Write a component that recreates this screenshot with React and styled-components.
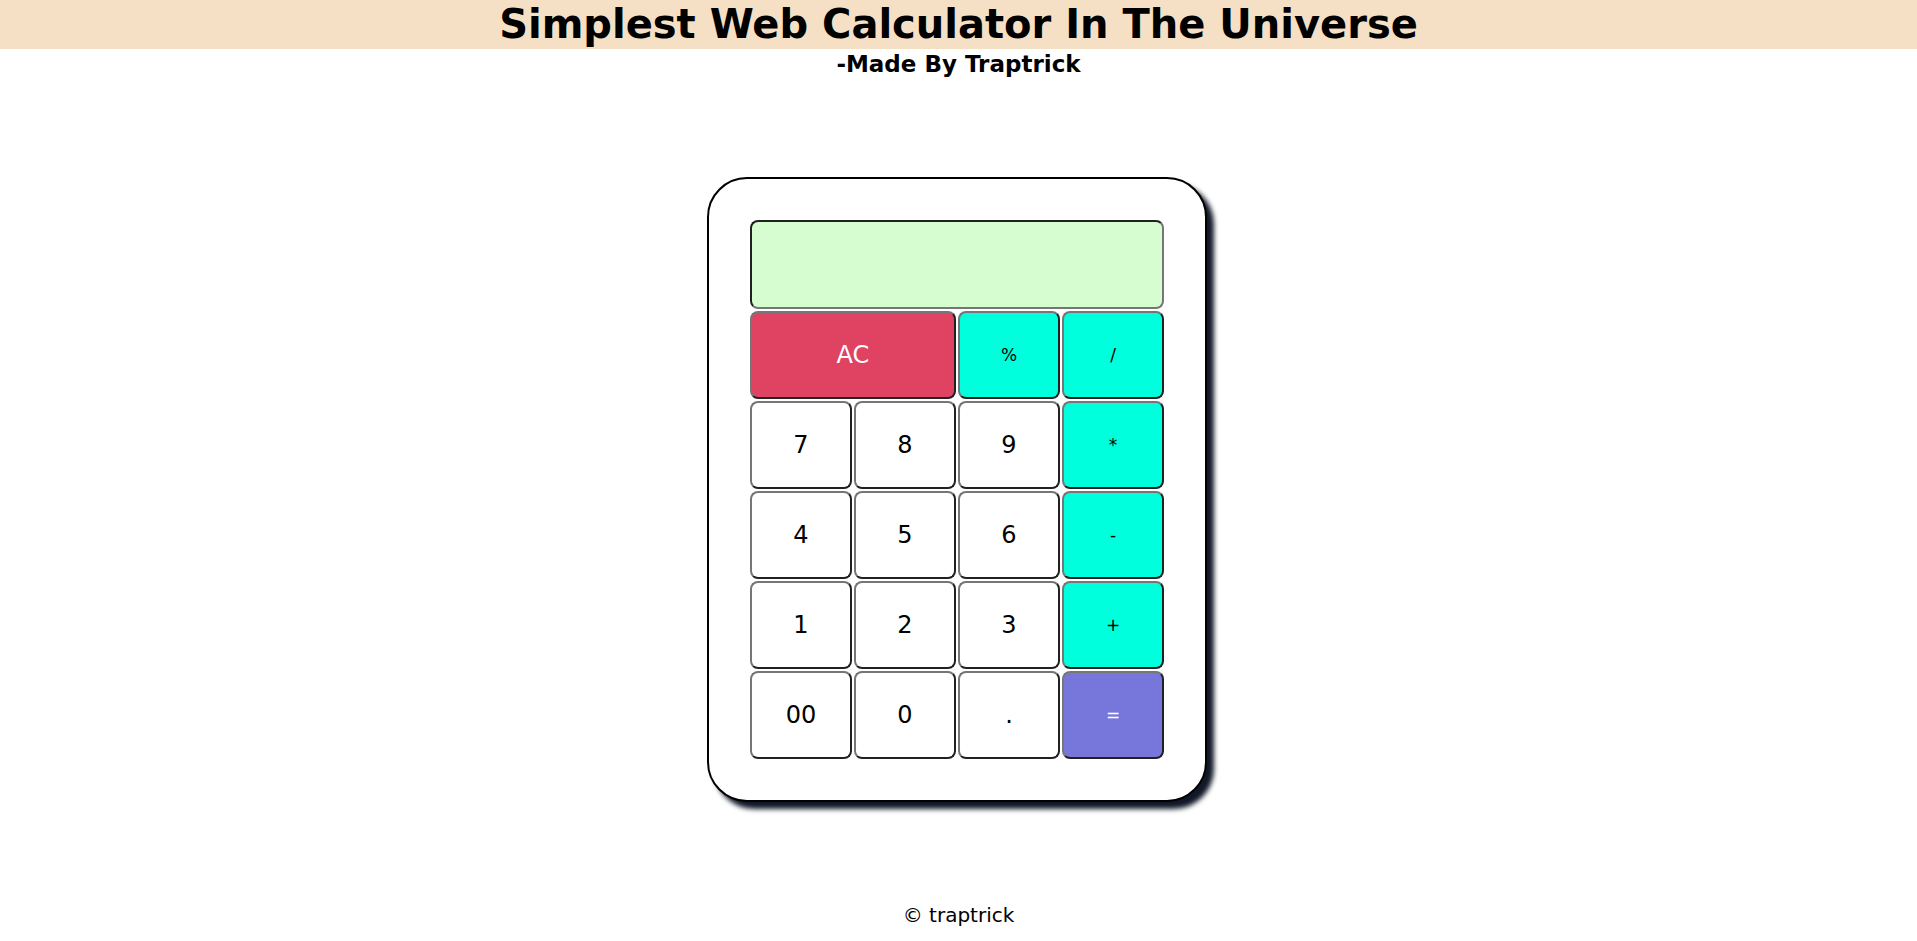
import React, {useState} from 'react'
import styled, {createGlobalStyle} from 'styled-components';

const GlobalStyle = createGlobalStyle`
  * { box-sizing: border-box; }
  body {
    margin: 0;
    font-family: Verdana, "DejaVu Sans", sans-serif;
    background: #fff;
  }
`
const Page = styled.div`
  width: 100%;
  min-height: 941px;
  display: flex;
  flex-direction: column;
  align-items: center;
`
const Title = styled.h1`
  width: 100%;
  margin: 0;
  background: #f5dfc5;
  text-align: center;
  font-size: 40px;
  line-height: 49px;
  font-weight: bold;
  color: #000;
`
const Subtitle = styled.h3`
  margin: 0;
  font-size: 23px;
  line-height: 30px;
  font-weight: bold;
  color: #000;
`
const Calculator = styled.div`
  margin-top: 98px;
  margin-right: 3px;
  width: 500px;
  padding: 41px;
  background: #fff;
  border: 2px solid #000;
  border-radius: 40px;
  box-shadow: 7px 7px 5px #111827;
`
const Display = styled.input`
  display: block;
  width: 100%;
  height: 89px;
  margin-bottom: 2px;
  background: #d5fdd0;
  border: 2px inset #767676;
  border-radius: 8px;
  outline: none;
  font-size: 32px;
  text-align: right;
  padding: 0 12px;
  font-family: inherit;
`
const Keys = styled.div`
  display: grid;
  grid-template-columns: repeat(4, 1fr);
  grid-auto-rows: 88px;
  gap: 2px;
`
const Key = styled.button`
  grid-column: span ${p => p.$span || 1};
  border: 2px outset #767676;
  border-radius: 8px;
  background: ${p => p.$bg || '#fff'};
  color: ${p => p.$color || '#000'};
  font-family: Verdana, "DejaVu Sans", sans-serif;
  font-size: ${p => p.$small ? '17px' : '24px'};
  cursor: pointer;
  padding: 0;
`
const Footer = styled.footer`
  margin-top: 101px;
  font-size: 20px;
  color: #000;
`

const OP = '#00ffdd';

const keys = [
  {label: 'AC', span: 2, bg: '#e04262', color: '#fff'},
  {label: '%', bg: OP, small: true},
  {label: '/', bg: OP, small: true},
  {label: '7'}, {label: '8'}, {label: '9'},
  {label: '*', bg: OP, small: true},
  {label: '4'}, {label: '5'}, {label: '6'},
  {label: '-', bg: OP, small: true},
  {label: '1'}, {label: '2'}, {label: '3'},
  {label: '+', bg: OP, small: true},
  {label: '00'}, {label: '0'}, {label: '.'},
  {label: '=', bg: '#7777db', color: '#fff', small: true},
];

function App() {
  const [value, setValue] = useState('');

  const press = (label) => {
    if (label === 'AC') return setValue('');
    if (label === '=') {
      try {
        // eslint-disable-next-line no-new-func
        setValue(String(Function('return (' + value + ')')()));
      } catch (e) {
        setValue('Error');
      }
      return;
    }
    setValue(v => v + label);
  }

  return (
    <Page>
      <GlobalStyle />
      <Title>Simplest Web Calculator In The Universe</Title>
      <Subtitle>-Made By Traptrick</Subtitle>
      <Calculator>
        <Display value={value} readOnly />
        <Keys>
          {keys.map(k => (
            <Key
              key={k.label}
              $span={k.span}
              $bg={k.bg}
              $color={k.color}
              $small={k.small}
              onClick={() => press(k.label)}
            >
              {k.label}
            </Key>
          ))}
        </Keys>
      </Calculator>
      <Footer>© traptrick</Footer>
    </Page>
  )
}

export default App
